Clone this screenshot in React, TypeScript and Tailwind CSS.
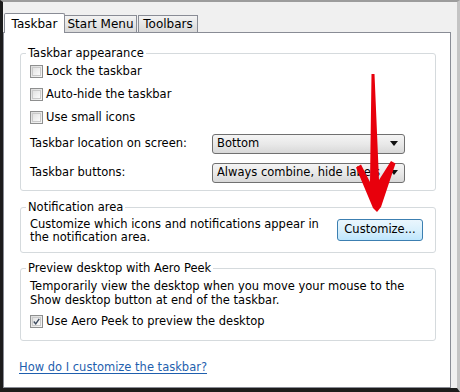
import React from 'react';

const font = { fontFamily: '"DejaVu Sans", Verdana, sans-serif' };

function Checkbox({ checked = false }: { checked?: boolean }) {
  return (
    <span className="w-[13px] h-[13px] shrink-0 border border-[#8e8f8f] bg-gradient-to-br from-[#dcdcdc] to-[#f6f6f6] flex items-center justify-center">
      <span className="w-[9px] h-[9px] border border-[#c9c9c9] bg-gradient-to-br from-[#e2e2e2] to-[#fbfbfb] flex items-center justify-center">
        {checked && (
          <svg width="9" height="9" viewBox="0 0 9 9">
            <path d="M1 4.5 L3.5 7.5 L8 1" fill="none" stroke="#3c4a5e" strokeWidth="1.8" />
          </svg>
        )}
      </span>
    </span>
  );
}

function CheckRow({ label, checked }: { label: string; checked?: boolean }) {
  return (
    <div className="h-[23px] flex items-center gap-[3px]">
      <Checkbox checked={checked} />
      <span>{label}</span>
    </div>
  );
}

function Dropdown({ value }: { value: string }) {
  return (
    <div className="w-[193px] h-[20px] border border-[#707070] rounded-[3px] bg-gradient-to-b from-[#f4f4f4] via-[#e9e9e9] to-[#d8d8d8] flex items-center pl-[4px] pr-[6px]">
      <span className="flex-1 whitespace-nowrap overflow-hidden">{value}</span>
      <svg width="8" height="5" viewBox="0 0 8 5">
        <path d="M0 0 H8 L4 5 Z" fill="#111" />
      </svg>
    </div>
  );
}

function Group({ title, className, children }: { title: string; className: string; children: React.ReactNode }) {
  return (
    <fieldset className={`border border-[#d5dadd] rounded-[3px] ml-[16px] mr-[14px] ${className}`}>
      <legend className="ml-[5px] px-[2px] leading-[14px]">{title}</legend>
      {children}
    </fieldset>
  );
}

export default function App() {
  return (
    <div className="relative w-[460px] h-[392px] text-[11.5px] text-black" style={font}>
      <div className="w-full h-full bg-[#f0f0f0] border-l-[3px] border-l-[#1c1c1c] border-b-[4px] border-b-[#1c1c1c] border-t-[2px] border-t-[#9c9c9c] border-r-[3px] border-r-[#c4c4c4] flex flex-col">
        <div className="h-[30px] flex items-end pl-[1px]">
          <div className="relative z-10 -mb-px h-[20px] w-[61px] bg-white border border-b-0 border-[#898c95] rounded-t-[2px] flex items-center justify-center text-[12px]">
            Taskbar
          </div>
          <div className="h-[17px] w-[72px] bg-gradient-to-b from-[#f3f3f3] to-[#d9d9d9] border border-b-0 border-[#898c95] border-l-0 flex items-center justify-center text-[12px]">
            Start Menu
          </div>
          <div className="h-[17px] w-[60px] ml-[1px] bg-gradient-to-b from-[#f3f3f3] to-[#d9d9d9] border border-b-0 border-[#898c95] flex items-center justify-center text-[12px]">
            Toolbars
          </div>
        </div>
        <div className="w-[448px] flex-1 bg-white border border-[#898c95] flex flex-col">
          <Group title="Taskbar appearance" className="mt-[13px] pb-[3px]">
            <div className="pl-[9px]">
              <CheckRow label="Lock the taskbar" />
              <CheckRow label="Auto-hide the taskbar" />
              <CheckRow label="Use small icons" />
              <div className="h-[29px] flex items-center">
                <span className="w-[182px]">Taskbar location on screen:</span>
                <Dropdown value="Bottom" />
              </div>
              <div className="h-[29px] flex items-center">
                <span className="w-[182px]">Taskbar buttons:</span>
                <Dropdown value="Always combine, hide labels" />
              </div>
            </div>
          </Group>

          <Group title="Notification area" className="mt-[9px] pb-[8px]">
            <div className="flex items-start pt-[4px] pl-[9px] pr-[12px]">
              <p className="w-[300px] leading-[13px]">
                Customize which icons and notifications appear in the notification area.
              </p>
              <button className="ml-auto mt-[1px] w-[86px] h-[22px] border border-[#3c7fb1] rounded-[3px] bg-gradient-to-b from-[#eaf6fd] via-[#d9f0fc] to-[#bee6fd] flex items-center justify-center">
                Customize...
              </button>
            </div>
          </Group>

          <Group title="Preview desktop with Aero Peek" className="mt-[8px] pb-[7px]">
            <div className="pl-[9px]">
              <p className="pt-[5px] leading-[13.5px] w-[405px]">
                Temporarily view the desktop when you move your mouse to the Show desktop button at end of the taskbar.
              </p>
              <div className="mt-[3px]">
                <CheckRow label="Use Aero Peek to preview the desktop" checked />
              </div>
            </div>
          </Group>

          <a href="#" className="ml-[15px] mt-[18px] text-[#1f5fae] underline underline-offset-2 self-start">
            How do I customize the taskbar?
          </a>
        </div>
      </div>

      <svg className="absolute inset-0 pointer-events-none" width="460" height="392" viewBox="0 0 460 392">
        <polygon
          points="371.5,74 374.5,74 379,180 391,161 395.5,163.5 381,207 377,212 373,208 356,167.5 361,164.5 370,182"
          fill="#e8000c"
        />
      </svg>
    </div>
  );
}
